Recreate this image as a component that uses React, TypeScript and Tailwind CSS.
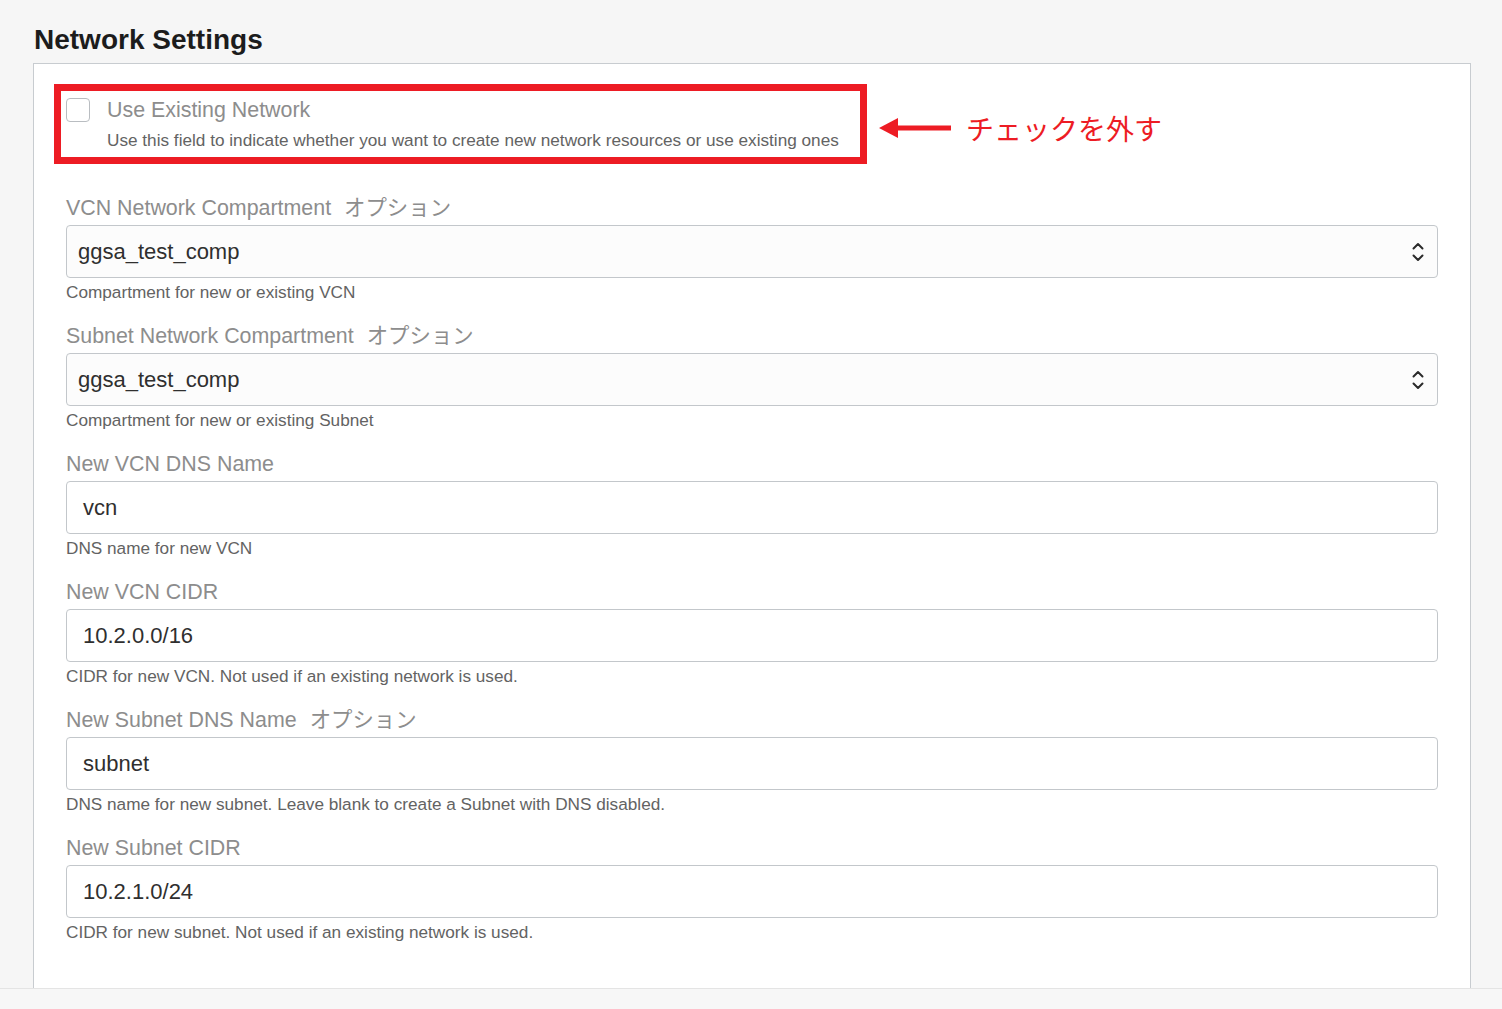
import React from 'react';

type Field = {
  label: string;
  optional?: boolean;
  value: string;
  help: string;
  select?: boolean;
};

const fields: Field[] = [
  {
    label: 'VCN Network Compartment',
    optional: true,
    value: 'ggsa_test_comp',
    help: 'Compartment for new or existing VCN',
    select: true,
  },
  {
    label: 'Subnet Network Compartment',
    optional: true,
    value: 'ggsa_test_comp',
    help: 'Compartment for new or existing Subnet',
    select: true,
  },
  { label: 'New VCN DNS Name', value: 'vcn', help: 'DNS name for new VCN' },
  {
    label: 'New VCN CIDR',
    value: '10.2.0.0/16',
    help: 'CIDR for new VCN. Not used if an existing network is used.',
  },
  {
    label: 'New Subnet DNS Name',
    optional: true,
    value: 'subnet',
    help: 'DNS name for new subnet. Leave blank to create a Subnet with DNS disabled.',
  },
  {
    label: 'New Subnet CIDR',
    value: '10.2.1.0/24',
    help: 'CIDR for new subnet. Not used if an existing network is used.',
  },
];

function UpDown() {
  return (
    <svg width="14" height="24" viewBox="0 0 14 24" fill="none" className="shrink-0">
      <path d="M2.5 8.5 L7 4 L11.5 8.5" stroke="#2b2b2b" strokeWidth="2" strokeLinecap="round" strokeLinejoin="round" />
      <path d="M2.5 15.5 L7 20 L11.5 15.5" stroke="#2b2b2b" strokeWidth="2" strokeLinecap="round" strokeLinejoin="round" />
    </svg>
  );
}

function FormField({ field }: { field: Field }) {
  return (
    <div className="flex flex-col">
      <label className="h-[24px] leading-[24px] text-[21.4px] text-[#8d8d8d] whitespace-nowrap">
        {field.label}
        {field.optional && <span className="ml-[13px]">オプション</span>}
      </label>
      {field.select ? (
        <div className="mt-[5px] h-[53px] flex items-center justify-between rounded-[4px] border border-[#c3c7cb] bg-[#fcfcfc] pl-[11px] pr-[12px]">
          <span className="text-[22px] text-[#2f2f2f]">{field.value}</span>
          <UpDown />
        </div>
      ) : (
        <div className="mt-[5px] h-[53px] flex items-center rounded-[4px] border border-[#c3c7cb] bg-white pl-[16px]">
          <span className="text-[22px] text-[#2f2f2f]">{field.value}</span>
        </div>
      )}
      <p className="mt-[4px] h-[20px] leading-[20px] text-[17.2px] text-[#636363] whitespace-nowrap">{field.help}</p>
    </div>
  );
}

export default function App() {
  return (
    <div className="h-screen w-full flex flex-col overflow-hidden bg-[#f6f6f6] font-['Liberation_Sans','Noto_Sans_CJK_JP',sans-serif]">
      {/* Section title */}
      <h2 className="pt-[24px] pl-[34px] h-[54px] leading-[32px] text-[28px] font-bold text-[#1c1c1c]">
        Network Settings
      </h2>

      {/* Panel */}
      <div className="mt-[9px] ml-[33px] w-[1438px] flex-1 overflow-hidden border-x border-t border-[#c8ccd0] bg-white px-[20px] pt-[20px]">
        <div className="flex items-start">
          <div className="w-[813px] border-[7px] border-[#ed1c24] px-[5px] pt-[7px] pb-[7px]">
            <div className="flex gap-[17px]">
              <div className="h-[24px] w-[24px] shrink-0 rounded-[4px] border border-[#b9bdc1] bg-white" />
              <div className="flex flex-col">
                <span className="h-[24px] leading-[24px] text-[21.4px] text-[#8d8d8d]">Use Existing Network</span>
                <span className="mt-[8px] h-[20px] leading-[20px] text-[17.2px] text-[#636363] whitespace-nowrap">
                  Use this field to indicate whether you want to create new network resources or use existing ones
                </span>
              </div>
            </div>
          </div>
          <svg width="72" height="22" viewBox="0 0 72 22" className="ml-[12px] mt-[33px] shrink-0">
            <path d="M0 11 L19 1 L19 21 Z" fill="#ed1c24" />
            <rect x="16" y="8.5" width="56" height="5" fill="#ed1c24" />
          </svg>
          <span className="ml-[15px] mt-[24px] text-[28px] leading-[40px] text-[#ed1c24] font-['Noto_Sans_CJK_JP',sans-serif] whitespace-nowrap">
            チェックを外す
          </span>
        </div>

        <div className="mt-[32px] pl-[12px] pr-[12px] flex flex-col gap-[22px]">
          {fields.map((f) => (
            <FormField key={f.label} field={f} />
          ))}
        </div>
      </div>

      <div className="h-[21px] shrink-0 border-t border-[#e4e4e4] bg-[#f7f7f7]" />
    </div>
  );
}
